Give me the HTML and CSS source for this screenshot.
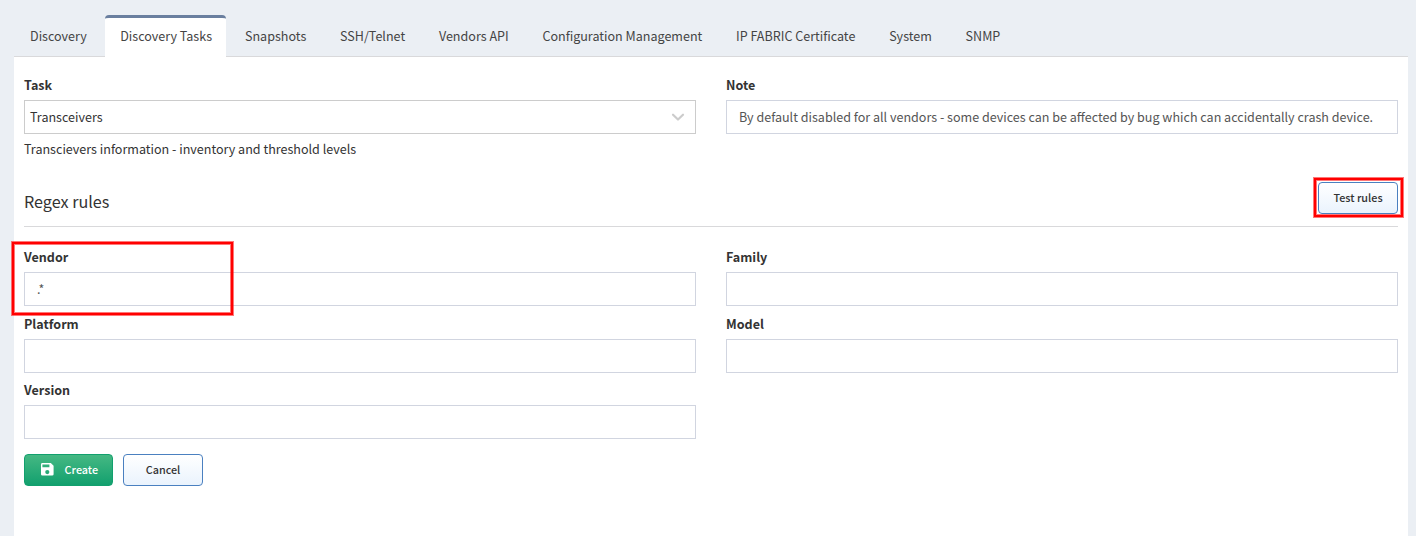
FILE: index.html
```html
<!DOCTYPE html>
<html lang="en">
<head>
<meta charset="utf-8">
<title>Discovery Tasks</title>
<link rel="stylesheet" href="styles.css">
</head>
<body>
<nav class="tabs">
  <a class="tab">Discovery</a>
  <a class="tab active">Discovery Tasks</a>
  <a class="tab">Snapshots</a>
  <a class="tab">SSH/Telnet</a>
  <a class="tab">Vendors API</a>
  <a class="tab">Configuration Management</a>
  <a class="tab">IP FABRIC Certificate</a>
  <a class="tab">System</a>
  <a class="tab">SNMP</a>
</nav>
<main class="panel">
  <div class="grid task-grid">
    <div class="field">
      <div class="label">Task</div>
      <div class="select"><span>Transceivers</span>
        <svg class="chevron" width="14" height="10" viewBox="0 0 14 10"><path d="M2 2.7 7 7.5 12 2.7" fill="none" stroke="#ccc" stroke-width="2.2" stroke-linecap="round" stroke-linejoin="round"/></svg>
      </div>
      <div class="hint">Transcievers information - inventory and threshold levels</div>
    </div>
    <div class="field">
      <div class="label">Note</div>
      <div class="input">By default disabled for all vendors - some devices can be affected by bug which can accidentally crash device.</div>
    </div>
  </div>
  <div class="section-head">
    <h2 class="title">Regex rules</h2>
    <div class="test-wrap"><div class="btn">Test rules</div><div class="mark mark-test"></div></div>
  </div>
  <div class="grid rules-grid">
    <div class="field marked">
      <div class="label">Vendor</div>
      <div class="input">.*</div>
      <div class="mark mark-vendor"></div>
    </div>
    <div class="field"><div class="label">Family</div><div class="input"></div></div>
    <div class="field"><div class="label">Platform</div><div class="input"></div></div>
    <div class="field"><div class="label">Model</div><div class="input"></div></div>
    <div class="field"><div class="label">Version</div><div class="input"></div></div>
  </div>
  <div class="actions">
    <div class="btn primary">
      <svg class="save" width="12.6" height="12.6" viewBox="3 3 18 18"><path fill="#fff" d="M15 9H5V5h10v4m-3 10a3 3 0 0 1-3-3 3 3 0 0 1 3-3 3 3 0 0 1 3 3 3 3 0 0 1-3 3m5-16H5a2 2 0 0 0-2 2v14a2 2 0 0 0 2 2h14a2 2 0 0 0 2-2V7l-4-4Z"/></svg>
      <span>Create</span>
    </div>
    <div class="btn">Cancel</div>
  </div>
</main>
</body>
</html>
```
FILE: styles.css
```css
* { box-sizing: border-box; }
body {
  margin: 0;
  height: 536px;
  overflow: hidden;
  padding: 15px 8px 0 14px;
  background: #ebeff4;
  display: flex;
  flex-direction: column;
  font-family: "Noto Sans CJK JP", sans-serif;
  font-size: 12.55px;
  line-height: 18px;
  color: #333;
}
.tabs {
  flex: none;
  height: 42px;
  display: flex;
  gap: 3.75px;
  padding-left: 1px;
  border-bottom: 1px solid #d9d9db;
}
.tab {
  height: 42px;
  padding: 9px 15px 0;
  border-top: 3px solid transparent;
  border-radius: 4px 4px 0 0;
  color: #444;
  white-space: nowrap;
}
.tab.active {
  margin-left: -.4px;
  padding-right: 14.2px;
  background: #fff;
  border-top-color: #6a7f9f;
}
.panel { flex: 1; background: #fff; padding: 19px 10px 0; }
.grid { display: grid; grid-template-columns: 1fr 1fr; column-gap: 30px; }
.task-grid { height: 106px; }
.rules-grid { margin-top: 20px; grid-auto-rows: 66.6px; }
.field { position: relative; }
.label { height: 24px; line-height: 18px; font-weight: 700; }
.rules-grid .label { height: 25px; line-height: 19px; }
.select, .input {
  height: 34px;
  display: flex;
  align-items: center;
  border: 1px solid #d1d5e0;
  padding: 0 12px;
  color: #555;
  white-space: nowrap;
}
.select { justify-content: space-between; border-color: #ccc; padding: 0 10px 0 5px; color: #333; }
.hint { margin-top: 6px; }
.section-head {
  height: 45px;
  display: flex;
  justify-content: space-between;
  border-bottom: 1px solid #d9d9db;
}
.title { margin: 6px 0 0; font-size: 16.15px; line-height: 26px; font-weight: 400; }
.test-wrap { position: relative; height: 32px; }
.btn {
  width: 80px;
  height: 32px;
  padding-bottom: 2px;
  display: flex;
  align-items: center;
  justify-content: center;
  border: 1px solid #4a80c0;
  border-radius: 4px;
  background: linear-gradient(#fff, #eaf3fd);
  font-size: 10.8px;
  font-weight: 500;
}
.btn.primary {
  width: 89px;
  padding-left: 2.5px;
  gap: 10.6px;
  color: #fff;
  border-color: #12a06e;
  background: linear-gradient(#45b883, #12a06e);
}
.save { margin-top: 2px; }
.actions { display: flex; gap: 10px; margin-top: 7px; }
.mark {
  position: absolute;
  border: 2px solid #f00;
  box-shadow: 0 0 0 1px #f008, inset 0 0 0 1px #f008;
}
.mark-test { left: -4px; top: -4px; width: 89px; height: 39px; }
.mark-vendor { left: -12px; top: -5px; width: 221px; height: 73px; }
```
